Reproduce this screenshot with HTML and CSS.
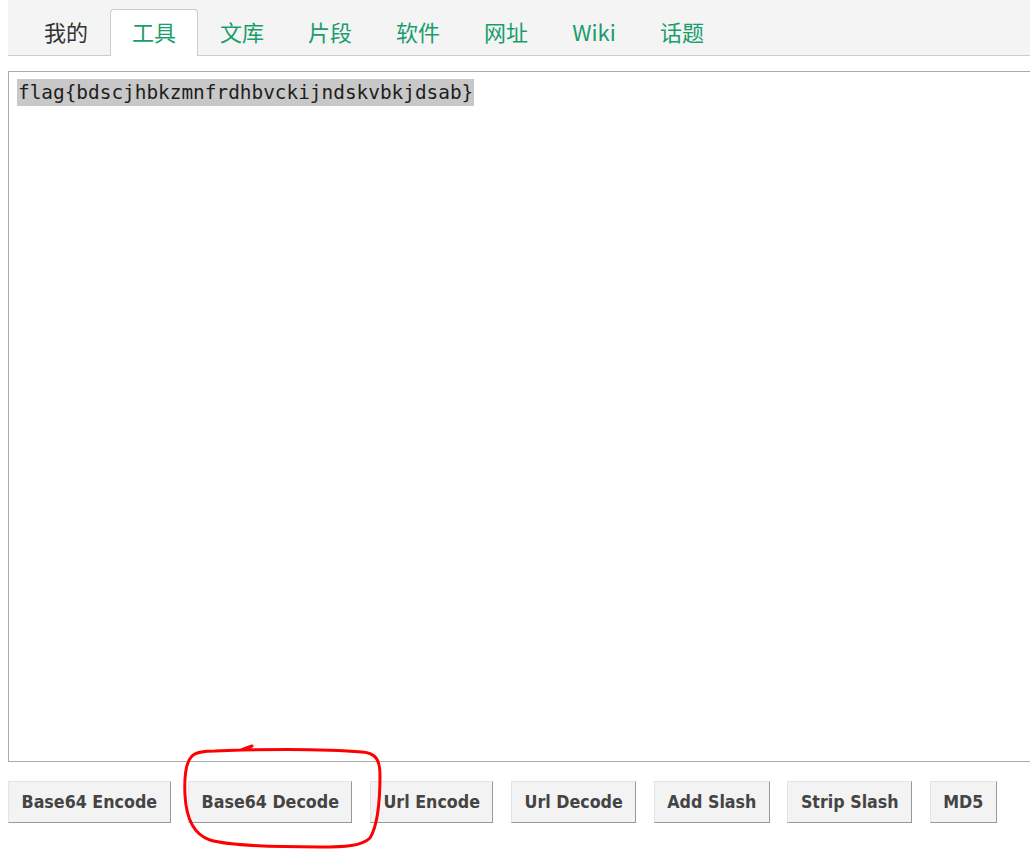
FILE: index.html
```html
<!DOCTYPE html>
<html lang="zh-CN">
<head>
<meta charset="utf-8">
<title>工具</title>
<link rel="stylesheet" href="styles.css">
</head>
<body>
<div class="page">
  <nav class="nav">
    <a class="tab tab-dark">我的</a>
    <a class="tab tab-active">工具</a>
    <a class="tab">文库</a>
    <a class="tab">片段</a>
    <a class="tab">软件</a>
    <a class="tab">网址</a>
    <a class="tab">Wiki</a>
    <a class="tab">话题</a>
  </nav>
  <div class="editor"><span class="sel">flag{bdscjhbkzmnfrdhbvckijndskvbkjdsab}</span></div>
  <div class="buttons">
    <button class="btn">Base64 Encode</button>
    <button class="btn">Base64 Decode</button>
    <button class="btn">Url Encode</button>
    <button class="btn">Url Decode</button>
    <button class="btn">Add Slash</button>
    <button class="btn">Strip Slash</button>
    <button class="btn">MD5</button>
  </div>
</div>
<svg class="mark" width="1030" height="849" viewBox="0 0 1030 849">
  <path d="M252,746 L241,750 C290,749 340,750 362,752 C376,753 380,760 380,775 C380,800 378,825 370,838 C362,846 345,847 320,847 C280,847 230,846 210,840 C192,834 186,815 185,795 C184,775 186,762 192,756 C196,752 205,751 215,751 L241,750" fill="none" stroke="#f00" stroke-width="3" stroke-linecap="round" stroke-linejoin="round"/>
</svg>
</body>
</html>
```
FILE: styles.css
```css
html, body {
  margin: 0;
  padding: 0;
  overflow: hidden;
  background: #fff;
}
body {
  position: relative;
  width: 1030px;
  height: 849px;
}
.page {
  padding-left: 8px;
  width: 1060px;
}
.nav {
  display: flex;
  align-items: flex-end;
  height: 55px;
  padding-left: 14px;
  background: #f4f4f4;
  border-bottom: 1px solid #ccc;
  box-sizing: content-box;
}
.tab {
  box-sizing: border-box;
  width: 88px;
  height: 47px;
  margin-bottom: -1px;
  display: flex;
  align-items: center;
  justify-content: center;
  padding-bottom: 5px;
  font-family: "Noto Sans CJK SC", "Noto Sans", sans-serif;
  font-size: 22px;
  color: #1a9d6c;
  border: 1px solid transparent;
  border-bottom: none;
  border-radius: 4px 4px 0 0;
  text-decoration: none;
}
.tab-dark {
  color: #333;
}
.tab-active {
  background: #fff;
  border-color: #ccc;
}
.editor {
  margin-top: 15px;
  box-sizing: border-box;
  height: 691px;
  border: 1px solid #aaa;
  padding: 7px 8px;
  font-family: "DejaVu Sans Mono", "Liberation Mono", monospace;
  font-size: 19.4px;
  color: #1e1e1e;
}
.sel {
  display: inline-block;
  line-height: 27px;
  background: #c8c8c8;
  padding: 0 1px;
}
.buttons {
  display: flex;
  gap: 17.5px;
  margin-top: 19px;
}
.btn {
  box-sizing: border-box;
  height: 42px;
  padding: 0 12.5px;
  margin: 0;
  background: #f3f3f3;
  border: 1px solid;
  border-color: #e4e4e4 #999 #999 #e4e4e4;
  border-radius: 0;
  font-family: "DejaVu Sans Condensed", "DejaVu Sans", Verdana, sans-serif;
  font-stretch: condensed;
  font-weight: bold;
  font-size: 17.7px;
  color: #444;
}
.mark {
  position: absolute;
  left: 0;
  top: 0;
  pointer-events: none;
}
```
